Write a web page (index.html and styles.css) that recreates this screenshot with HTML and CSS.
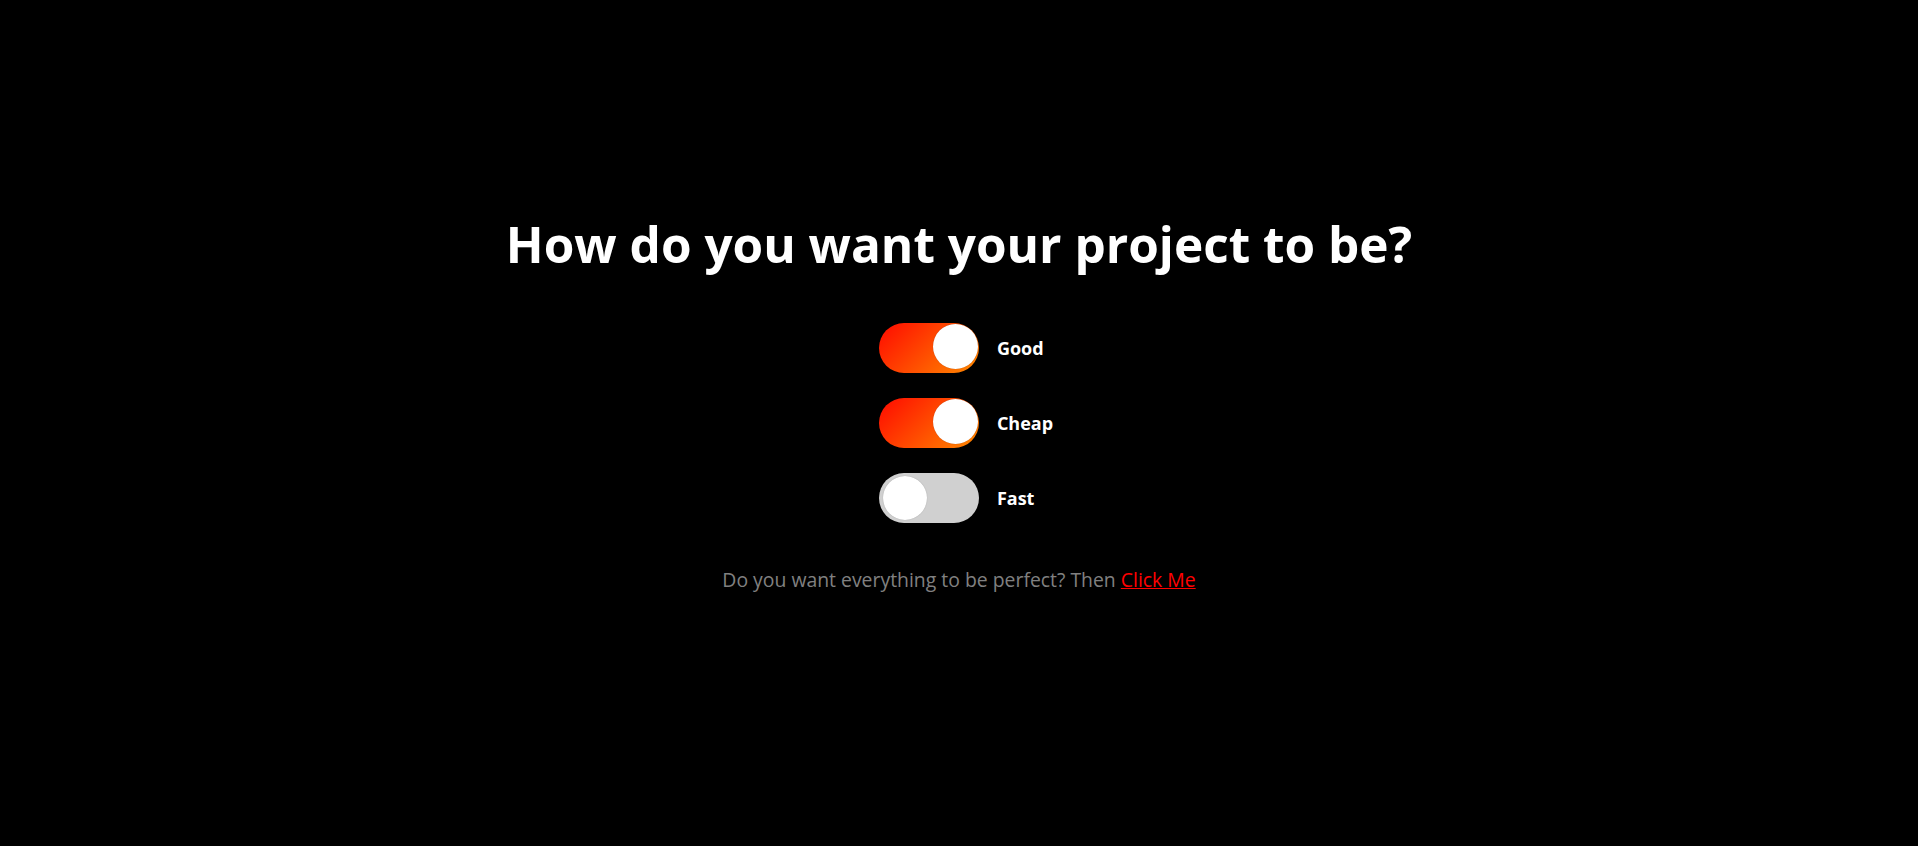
FILE: index.html
```html
<!DOCTYPE html>
<html lang="en">
<head>
<meta charset="utf-8">
<title>Good, Cheap, Fast</title>
<link rel="stylesheet" href="styles.css">
</head>
<body>
<main class="page">
  <h1 class="title">How do you want your project to be?</h1>
  <div class="options">
    <label class="option">
      <span class="switch on"><span class="knob"></span></span>
      <span class="label">Good</span>
    </label>
    <label class="option">
      <span class="switch on"><span class="knob"></span></span>
      <span class="label">Cheap</span>
    </label>
    <label class="option">
      <span class="switch"><span class="knob"></span></span>
      <span class="label">Fast</span>
    </label>
  </div>
  <p class="note">Do you want everything to be perfect? Then <a class="link" href="#">Click Me</a></p>
</main>
</body>
</html>
```
FILE: styles.css
```css
html, body {
  margin: 0;
  padding: 0;
  background: #000;
  height: 100%;
}
body {
  font-family: "Open Sans", "DejaVu Sans", sans-serif;
  color: #fff;
}
.page {
  display: flex;
  flex-direction: column;
  align-items: center;
  padding-top: 214px;
}
.title {
  margin: 0;
  font-size: 49.5px;
  line-height: 60px;
  font-weight: 700;
  letter-spacing: 0;
}
.options {
  display: flex;
  flex-direction: column;
  gap: 25px;
  margin-top: 49px;
  margin-left: 14px;
}
.option {
  display: flex;
  align-items: center;
  gap: 18px;
}
.switch {
  position: relative;
  display: block;
  width: 100px;
  height: 50px;
  border-radius: 25px;
  background: #d0d0d0;
  box-sizing: border-box;
}
.switch.on {
  background: linear-gradient(135deg, #ff0a00 0%, #ff4a00 50%, #ff8a00 100%);
}
.knob {
  position: absolute;
  top: 3px;
  left: 4px;
  width: 44px;
  height: 44px;
  border-radius: 50%;
  background: #fff;
  box-shadow: 0 0 1px rgba(0,0,0,0.3);
}
.switch.on .knob {
  left: 54px;
  top: 1px;
  width: 45px;
  height: 45px;
}
.label {
  font-size: 18px;
  font-weight: 700;
}
.note {
  margin: 43px 0 0;
  font-size: 19.4px;
  color: #808080;
}
.link {
  color: #ff0000;
}
```
